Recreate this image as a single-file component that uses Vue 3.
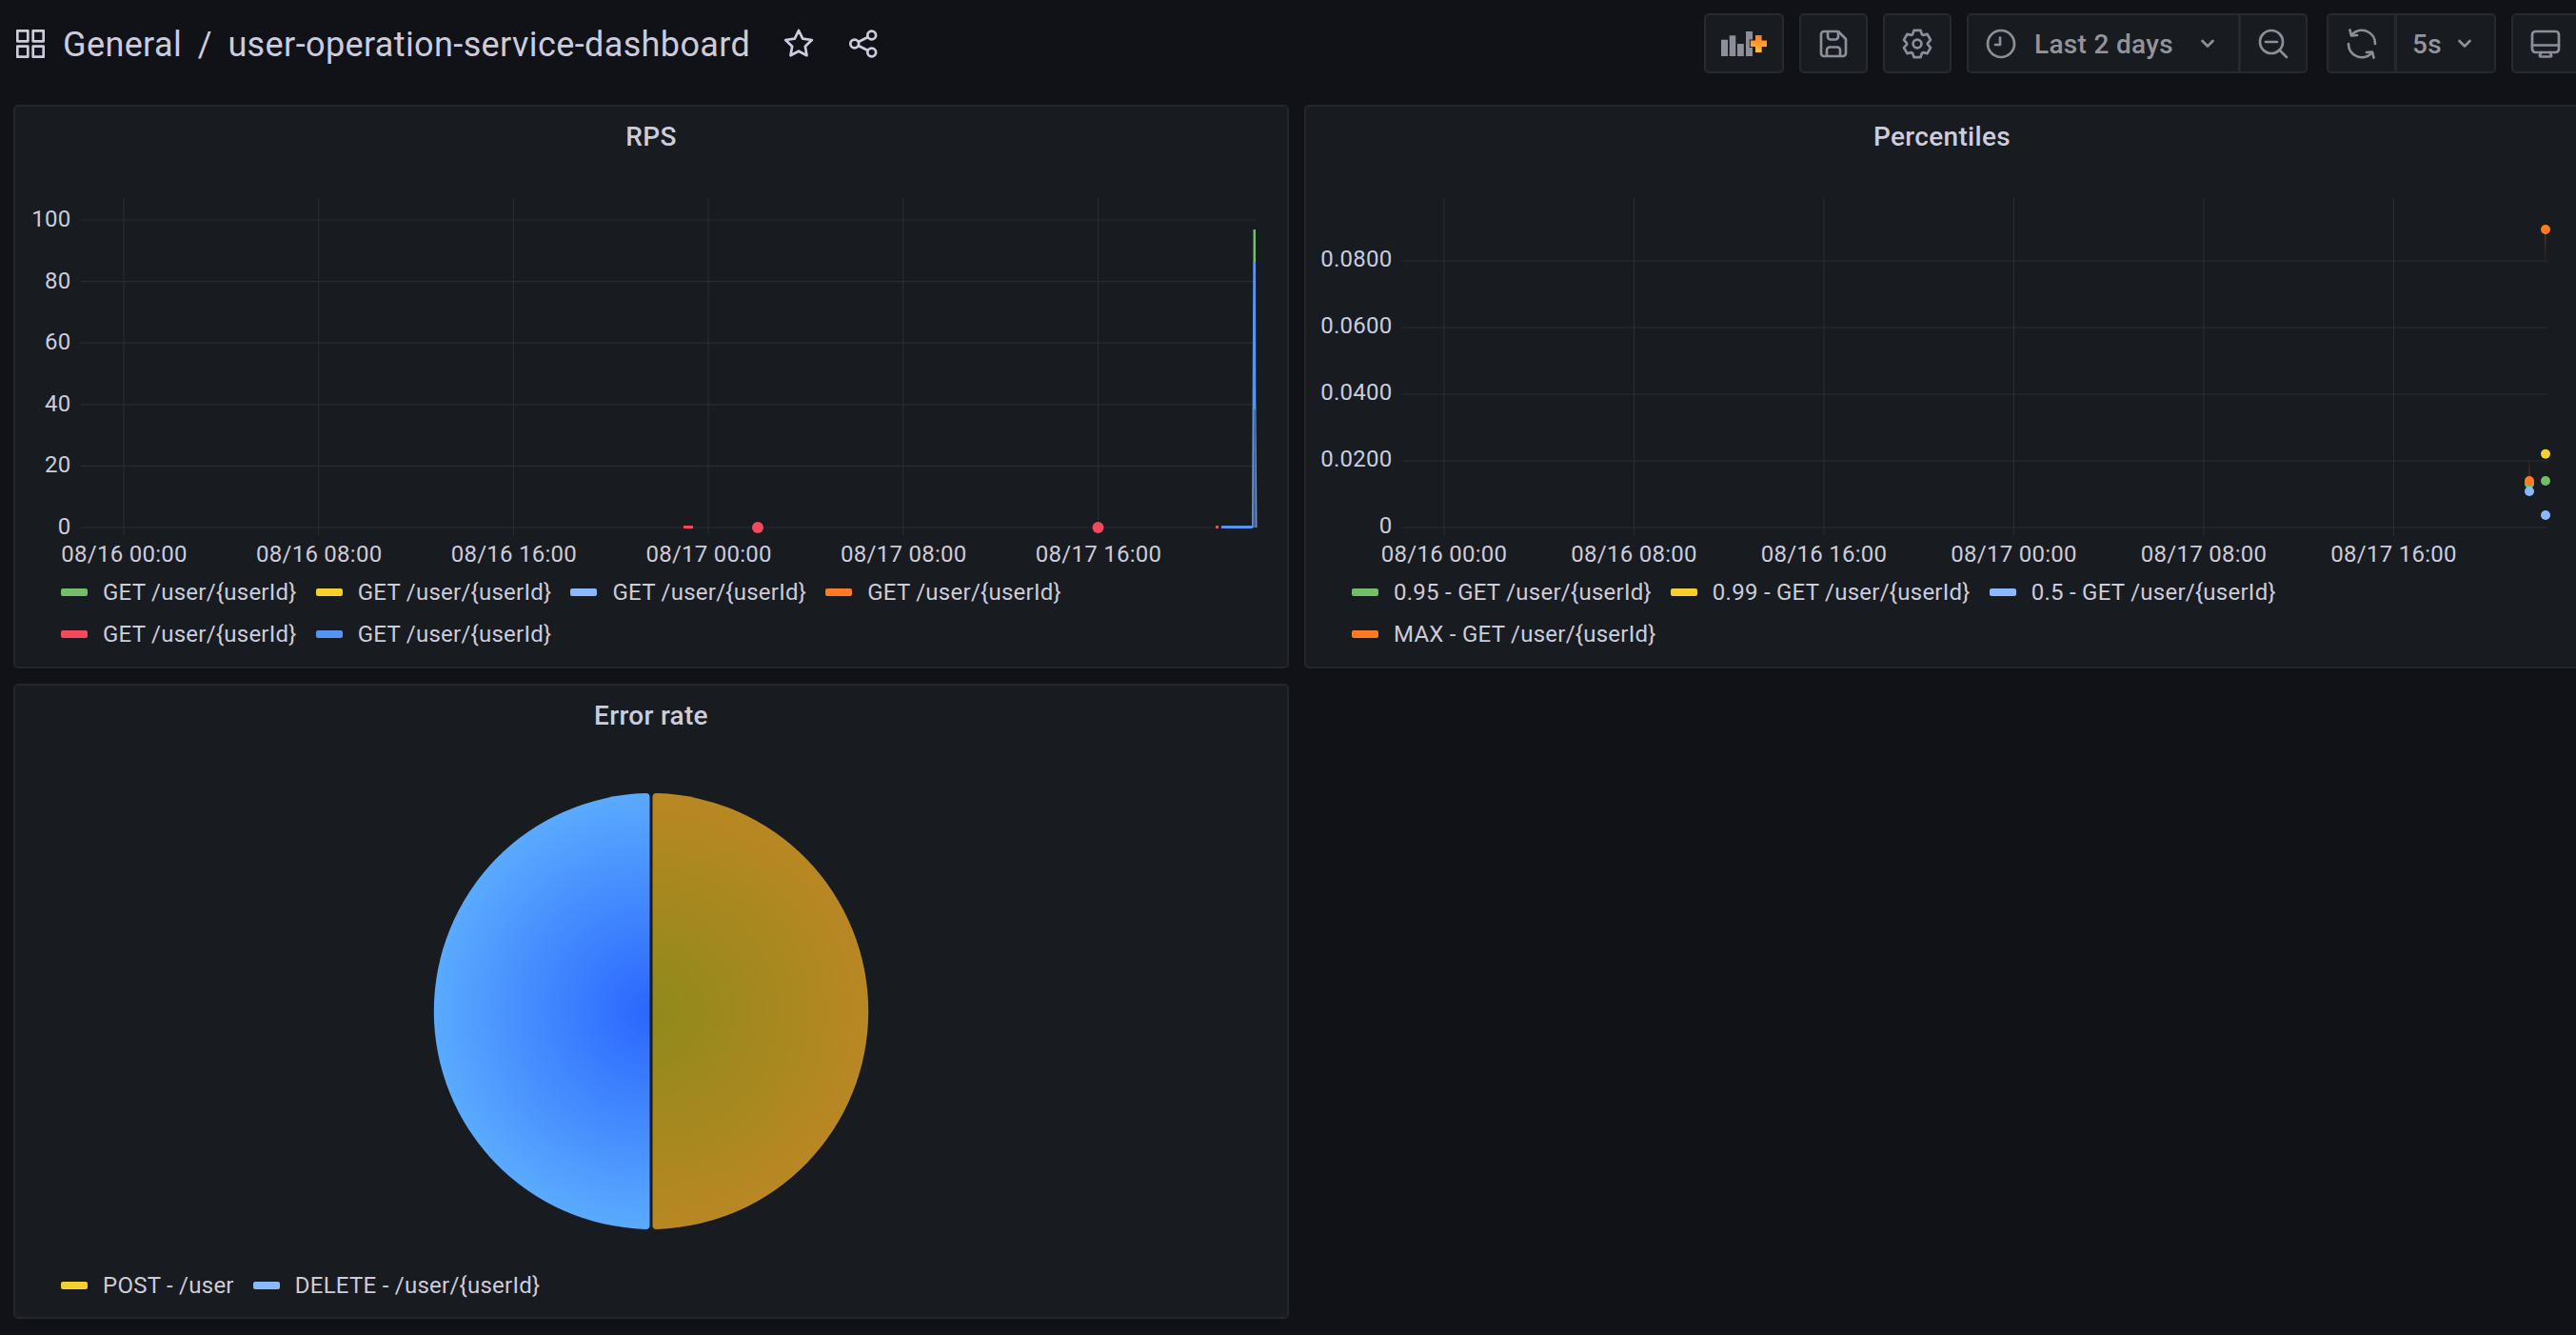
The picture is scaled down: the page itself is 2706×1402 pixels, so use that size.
<script setup>
const star = Array.from({ length: 10 }, (_, i) => {
  const r = i % 2 ? 7.2 : 14.5
  const a = -Math.PI / 2 + (i * Math.PI) / 5
  return `${(16 + r * Math.cos(a)).toFixed(2)},${(16.5 + r * Math.sin(a)).toFixed(2)}`
}).join(' ')

const gear = (() => {
  const pts = []
  for (let i = 0; i < 6; i++) {
    const c = (i * Math.PI) / 3 - Math.PI / 2
    ;[[-0.46, 11], [-0.24, 14.6], [0.24, 14.6], [0.46, 11]].forEach(([d, r]) => {
      pts.push(`${(16 + r * Math.cos(c + d)).toFixed(2)} ${(16 + r * Math.sin(c + d)).toFixed(2)}`)
    })
  }
  return 'M' + pts.join('L') + 'Z'
})()

const G = '#73bf69', Y = '#f4cf2e', B = '#8ab8ff', O = '#ff7a22', R = '#f2495c', D = '#5794f2'
const gu = 'GET /user/{userId}'
const rpsLegend = [[G, gu], [Y, gu], [B, gu], [O, gu], [R, gu], [D, gu]]
const pctLegend = [[G, '0.95 - ' + gu], [Y, '0.99 - ' + gu], [B, '0.5 - ' + gu], [O, 'MAX - ' + gu]]
const pieLegend = [[Y, 'POST - /user'], [B, 'DELETE - /user/{userId}']]

const xNames = ['08/16 00:00', '08/16 08:00', '08/16 16:00', '08/17 00:00', '08/17 08:00', '08/17 16:00']
const rpsX = xNames.map((n, i) => ({ n, x: 130 + i * 204.7 }))
const rpsY = ['0', '20', '40', '60', '80', '100'].map((n, i) => ({ n, y: 554 - i * 64.6 }))
const pctX = xNames.map((n, i) => ({ n, x: 1517 + i * 199.5 }))
const pctY = ['0', '0.0200', '0.0400', '0.0600', '0.0800'].map((n, i) => ({ n, y: 554 - i * 70 }))
const pctDots = [
  [2657, 508, G], [2657, 505, O], [2657, 516, B],
  [2674, 241, O], [2674, 476.7, Y], [2674, 505, G], [2674, 541, B]
]
</script>

<template>
  <div class="page">
    <header class="top">
      <svg class="grid-ic" width="30" height="30" viewBox="0 0 30 30">
        <rect x="1.3" y="1.3" width="11" height="11" />
        <rect x="17.7" y="1.3" width="11" height="11" />
        <rect x="1.3" y="17.7" width="11" height="11" />
        <rect x="17.7" y="17.7" width="11" height="11" />
      </svg>
      <div class="crumb"><span>General</span><span class="sep">/</span><span>user-operation-service-dashboard</span></div>
      <svg class="ic-star" width="32" height="32" viewBox="0 0 32 32"><polygon :points="star" /></svg>
      <svg class="ic-share" width="32" height="32" viewBox="0 0 32 32">
        <circle cx="24.7" cy="7" r="4.4" /><circle cx="6.7" cy="16" r="4.4" /><circle cx="24.7" cy="25" r="4.4" />
        <path d="M10.7 14 L20.7 9 M10.7 18 L20.7 23" />
      </svg>

      <div class="tools">
        <button class="btn w84">
          <svg width="48" height="28" viewBox="0 0 48 28">
            <defs>
              <linearGradient id="plusGrad" x1="0" y1="0" x2="0" y2="1">
                <stop offset="0" stop-color="#ff7a2a" /><stop offset="1" stop-color="#fbc42c" />
              </linearGradient>
            </defs>
            <g fill="#8e8e98">
              <rect x="0" y="9.7" width="7" height="17.3" />
              <rect x="8.7" y="5.3" width="6.6" height="21.7" />
              <rect x="17" y="14" width="6.8" height="13" />
              <rect x="26" y="1" width="7" height="26" />
            </g>
            <path d="M36 5h6.6v5.4H48v6.6h-5.4V23H36v-6H30.8v-6.6H36z" fill="url(#plusGrad)" stroke="#181b1f" stroke-width="2" paint-order="stroke" />
          </svg>
        </button>
        <button class="btn w72">
          <svg class="ic" width="32" height="32" viewBox="0 0 32 32">
            <path d="M6 3h15l8 8v15a3 3 0 0 1-3 3H6a3 3 0 0 1-3-3V6a3 3 0 0 1 3-3z" />
            <path d="M10 3.500v5a3 3 0 0 0 3 3h5a3 3 0 0 0 3-3V4" />
            <path d="M9 28.500v-6a3 3 0 0 1 3-3h8a3 3 0 0 1 3 3v6" />
          </svg>
        </button>
        <button class="btn w72">
          <svg class="ic" width="32" height="32" viewBox="0 0 32 32">
            <path :d="gear" /><circle cx="16" cy="16" r="4.4" />
          </svg>
        </button>
        <div class="group">
          <button class="btn time">
            <svg class="ic" width="32" height="32" viewBox="0 0 32 32">
              <circle cx="16" cy="16" r="14" /><path d="M15 9.500v7.500h-5" />
            </svg>
            <span class="time-label">Last 2 days</span>
            <svg class="ic chev" width="16" height="10" viewBox="0 0 16 10"><path d="M2.500 2 L8 7.500 L13.500 2" /></svg>
          </button>
          <button class="btn joined w72">
            <svg class="ic" width="32" height="32" viewBox="0 0 32 32">
              <circle cx="14" cy="14" r="12" /><path d="M8 14h12 M23 23l7 7" />
            </svg>
          </button>
        </div>
        <div class="group refresh">
          <button class="btn w73">
            <svg class="ic" width="32" height="32" viewBox="0 0 32 32">
              <path d="M6 6A14 14 0 0 1 30 16" /><path d="M3.500 1.500 5 7.500 11 7" />
              <path d="M2 16A14 14 0 0 0 26 26" /><path d="M28.500 30.500 27 24.500 21 25" />
            </svg>
          </button>
          <button class="btn auto">
            <span class="time-label">5s</span>
            <svg class="ic chev" width="16" height="10" viewBox="0 0 16 10"><path d="M2.500 2 L8 7.500 L13.500 2" /></svg>
          </button>
        </div>
        <button class="btn w72">
          <svg class="ic" width="32" height="32" viewBox="0 0 32 32">
            <rect x="2" y="3" width="28" height="22" rx="3.500" /><path d="M2 17.500h28" />
            <path d="M11.500 25l-1.500 3a1 1 0 0 0 1 1.500h10a1 1 0 0 0 1-1.500l-1.500-3" />
          </svg>
        </button>
      </div>
    </header>

    <main class="board">
      <section class="panel short">
        <h2>RPS</h2>
        <div class="chart">
          <svg class="plot" viewBox="16 176 1336 424" width="1336" height="424">
            <line v-for="t in rpsX" :key="t.n" class="gv" :x1="t.x" :x2="t.x" y1="208" y2="562" />
            <line v-for="t in rpsY" :key="t.n" class="gh" x1="85" x2="1320" :y1="t.y" :y2="t.y" />
            <text v-for="t in rpsY" :key="t.n" class="tick" :x="74.500" :y="t.y + 7" text-anchor="end">{{ t.n }}</text>
            <text v-for="t in rpsX" :key="t.n" class="tick" :x="t.x + 0.500" y="590" text-anchor="middle">{{ t.n }}</text>
            <rect x="718" y="552" width="10" height="3" :fill="R" />
            <rect x="1277" y="552" width="3" height="3" :fill="R" />
            <circle cx="796" cy="554" r="6" :fill="R" />
            <circle cx="1153.500" cy="554" r="6" :fill="R" />
            <rect x="1283" y="552" width="33" height="3" :fill="D" />
            <rect x="1316.500" y="241" width="2.500" height="36" :fill="G" />
            <path d="M1317.800 410 L1318 554" stroke="#7d7f82" stroke-width="1.200" fill="none" />
            <polygon :fill="D" points="1316.300,275 1319,275 1319.300,413 1320.500,554 1318.800,554 1318.500,430 1317.200,430 1316.800,554 1315,554" />
          </svg>
        </div>
        <ul class="legend">
          <li v-for="(l, i) in rpsLegend" :key="i"><i :style="{ background: l[0] }"></i>{{ l[1] }}</li>
        </ul>
      </section>

      <section class="panel short">
        <h2>Percentiles</h2>
        <div class="chart">
          <svg class="plot" viewBox="1372 176 1336 424" width="1336" height="424">
            <defs>
              <linearGradient id="fadeA" x1="0" y1="0" x2="0" y2="1">
                <stop offset="0" stop-color="#ff780a" stop-opacity=".3" /><stop offset="1" stop-color="#ff780a" stop-opacity="0" />
              </linearGradient>
              <linearGradient id="fadeB" x1="0" y1="1" x2="0" y2="0">
                <stop offset="0" stop-color="#ff780a" stop-opacity=".3" /><stop offset="1" stop-color="#ff780a" stop-opacity="0" />
              </linearGradient>
            </defs>
            <line v-for="t in pctX" :key="t.n" class="gv" :x1="t.x" :x2="t.x" y1="208" y2="562" />
            <line v-for="t in pctY" :key="t.n" class="gh" x1="1473" x2="2676" :y1="t.y" :y2="t.y" />
            <text v-for="t in pctY" :key="t.n" class="tick" x="1462.500" :y="t.y + 6" text-anchor="end">{{ t.n }}</text>
            <text v-for="t in pctX" :key="t.n" class="tick" :x="t.x" y="590" text-anchor="middle">{{ t.n }}</text>
            <rect x="2673" y="241" width="1.500" height="40" fill="url(#fadeA)" />
            <rect x="2656.300" y="478" width="1.500" height="27" fill="url(#fadeB)" />
            <circle v-for="(d, i) in pctDots" :key="i" :cx="d[0]" :cy="d[1]" r="5" :fill="d[2]" />
          </svg>
        </div>
        <ul class="legend">
          <li v-for="(l, i) in pctLegend" :key="i"><i :style="{ background: l[0] }"></i>{{ l[1] }}</li>
        </ul>
      </section>

      <section class="panel tall">
        <h2>Error rate</h2>
        <div class="chart">
          <svg class="plot" viewBox="16 784 1336 544" width="1336" height="544">
            <defs>
              <radialGradient id="pieB" gradientUnits="userSpaceOnUse" cx="684" cy="1062" r="229">
                <stop offset="0" stop-color="#2a66ff" /><stop offset="1" stop-color="#5aaaff" />
              </radialGradient>
              <radialGradient id="pieY" gradientUnits="userSpaceOnUse" cx="684" cy="1062" r="229">
                <stop offset="0" stop-color="#8f8a1b" /><stop offset="1" stop-color="#b98723" />
              </radialGradient>
            </defs>
            <path fill="url(#pieB)" d="M678 833.100A229 229 0 0 0 678 1290.900Q682.500 1291 682.500 1287V837Q682.500 833 678 833.100Z" />
            <path fill="url(#pieY)" d="M690 833.100A229 229 0 0 1 690 1290.900Q685.500 1291 685.500 1287V837Q685.500 833 690 833.100Z" />
          </svg>
        </div>
        <ul class="legend">
          <li v-for="(l, i) in pieLegend" :key="i"><i :style="{ background: l[0] }"></i>{{ l[1] }}</li>
        </ul>
      </section>
    </main>
  </div>
</template>

<style scoped>
.page {
  width: 2710px;
  height: 1402px;
  background: #111217;
  color: #ccccdc;
  font-family: Roboto, "Liberation Sans", sans-serif;
}
.top {
  height: 110px;
  box-sizing: border-box;
  padding: 14px 0 33px 17px;
  display: flex;
  align-items: center;
}
.crumb {
  margin-left: 19px;
  padding-top: 3px;
  font-size: 36px;
  letter-spacing: 0.01071em;
  line-height: 60px;
  white-space: nowrap;
  display: flex;
}
.sep { margin: 0 16.5px; }
.grid-ic rect, .ic-star polygon, .ic-share circle, .ic-share path {
  fill: none;
  stroke: #ccccdc;
  stroke-width: 2.7;
  stroke-linejoin: round;
}
.ic-star { margin-left: 35px; }
.ic-share { margin-left: 36px; }
.tools {
  margin-left: auto;
  display: flex;
  gap: 16px;
}
.btn {
  height: 63px;
  box-sizing: border-box;
  padding: 0;
  background: #181b1f;
  border: 2px solid #27292e;
  border-radius: 5px;
  display: flex;
  align-items: center;
  justify-content: center;
  color: #94949e;
  font: 500 28px Roboto, "Liberation Sans", sans-serif;
  letter-spacing: 0.01071em;
}
.w84 { width: 84px; }
.w72 { width: 72px; }
.w73 { width: 73px; border-radius: 5px 0 0 5px; }
.group { display: flex; }
.group .btn + .btn { margin-left: -1px; }
.time { width: 287px; border-radius: 5px 0 0 5px; justify-content: flex-start; padding-left: 18px; }
.joined { border-radius: 0 5px 5px 0; }
.auto { width: 106px; border-radius: 0 5px 5px 0; justify-content: flex-start; padding-left: 16px; }
.refresh { margin-left: 4px; }
.ic { fill: none; stroke: #8e8e98; stroke-width: 2.7; stroke-linecap: round; stroke-linejoin: round; }
.time-label { padding-top: 2px; }
.time .time-label { margin-left: 19px; }
.time .chev { margin-left: 28px; }
.auto .chev { margin-left: 16px; }
.board {
  padding-left: 14px;
  display: grid;
  grid-template-columns: 1340px 1340px;
  grid-template-rows: 592px 667px;
  gap: 16px;
}
.panel {
  box-sizing: border-box;
  background: #181b1f;
  border: 2px solid #24262b;
  border-radius: 5px;
  display: flex;
  flex-direction: column;
  overflow: hidden;
}
h2 {
  margin: 0;
  height: 64px;
  flex: none;
  font-size: 28px;
  font-weight: 500;
  letter-spacing: 0.01071em;
  line-height: 64px;
  text-align: center;
  color: #ccccdc;
}
.chart { flex: 1; min-height: 0; }
.plot { display: block; }
.gh { stroke: #292c30; stroke-width: 1.200; }
.gv { stroke: #2b2e32; stroke-width: 1; }
.tick { fill: #ccccdc; font-size: 24px; letter-spacing: 0.01071em; font-family: Roboto, "Liberation Sans", sans-serif; }
.legend {
  list-style: none;
  margin: 0;
  padding: 0 0 12px 48px;
  display: flex;
  flex-wrap: wrap;
  font-size: 24px;
  letter-spacing: 0.01071em;
}
.tall .legend { padding-bottom: 11px; }
.legend li {
  height: 44px;
  display: flex;
  align-items: center;
  margin-right: 20px;
  white-space: nowrap;
}
.legend i {
  width: 28px;
  height: 8px;
  border-radius: 2px;
  margin-right: 16px;
}
</style>

<style>
html, body { margin: 0; background: #111217; overflow: hidden; }
</style>
